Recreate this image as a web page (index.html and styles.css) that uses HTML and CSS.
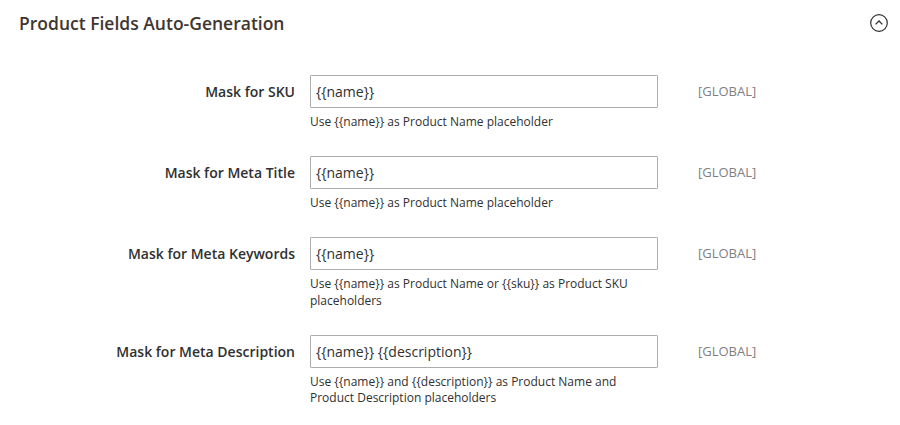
FILE: index.html
```html
<!DOCTYPE html>
<html>
<head>
<meta charset="utf-8">
<link rel="stylesheet" href="styles.css">
</head>
<body>
<section class="section">
  <header class="section-head">
    <h2 class="section-title">Product Fields Auto-Generation</h2>
    <svg class="toggle" width="20" height="20" viewBox="0 0 20 20">
      <circle cx="10" cy="10" r="8.3" fill="none" stroke="#303030" stroke-width="1.2"/>
      <path d="M6.6 11.4 L10 8 L13.4 11.4" fill="none" stroke="#303030" stroke-width="1.3"/>
    </svg>
  </header>
  <div class="fields">
    <div class="row">
      <label class="label">Mask for SKU</label>
      <div class="control">
        <input class="input" type="text" value="{{name}}">
        <p class="note">Use {{name}} as Product Name placeholder</p>
      </div>
      <div class="scope">[GLOBAL]</div>
    </div>
    <div class="row">
      <label class="label">Mask for Meta Title</label>
      <div class="control">
        <input class="input" type="text" value="{{name}}">
        <p class="note">Use {{name}} as Product Name placeholder</p>
      </div>
      <div class="scope">[GLOBAL]</div>
    </div>
    <div class="row">
      <label class="label">Mask for Meta Keywords</label>
      <div class="control">
        <input class="input" type="text" value="{{name}}">
        <p class="note">Use {{name}} as Product Name or {{sku}} as Product SKU placeholders</p>
      </div>
      <div class="scope">[GLOBAL]</div>
    </div>
    <div class="row">
      <label class="label">Mask for Meta Description</label>
      <div class="control">
        <input class="input" type="text" value="{{name}} {{description}}">
        <p class="note">Use {{name}} and {{description}} as Product Name and Product Description placeholders</p>
      </div>
      <div class="scope">[GLOBAL]</div>
    </div>
  </div>
</section>
</body>
</html>
```
FILE: styles.css
```css
* { box-sizing: border-box; }
body {
  margin: 0;
  background: #ffffff;
  font-family: "Open Sans", "Liberation Sans", sans-serif;
  color: #303030;
}
.section-head {
  display: flex;
  align-items: center;
  justify-content: space-between;
  height: 45px;
  padding: 0 11px 0 19px;
}
.section-title {
  margin: 0;
  font-size: 17.5px;
  font-weight: 600;
  color: #41362f;
  line-height: 24px;
}
.toggle { display: block; }
.fields {
  padding-top: 30px;
}
.row {
  display: grid;
  grid-template-columns: 310px 348px auto;
  align-items: start;
  margin-bottom: 25.5px;
}
.label {
  text-align: right;
  padding-right: 15px;
  font-size: 14px;
  font-weight: 600;
  line-height: 33px;
  color: #303030;
}
.control { width: 348px; }
.input {
  display: block;
  width: 348px;
  height: 33px;
  border: 1px solid #adadad;
  border-radius: 1px;
  padding: 0 5px;
  font-family: "Open Sans", "Liberation Sans", sans-serif;
  font-size: 14px;
  color: #303030;
  outline: none;
}
.note {
  margin: 6px 0 0;
  font-size: 12px;
  line-height: 16.5px;
  color: #303030;
  padding-right: 20px;
}
.scope {
  padding-left: 40px;
  font-size: 13px;
  line-height: 33px;
  color: #808080;
}
```
